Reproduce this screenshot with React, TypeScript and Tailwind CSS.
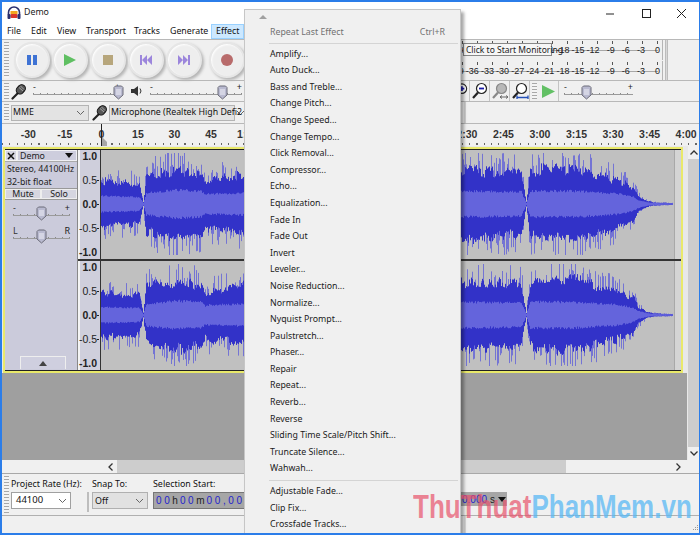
import React, { useMemo } from "react";

const ui = "font-['Noto_Sans',sans-serif]";
const effects = ["Amplify...","Auto Duck...","Bass and Treble...","Change Pitch...","Change Speed...","Change Tempo...","Click Removal...","Compressor...","Echo...","Equalization...","Fade In","Fade Out","Invert","Leveler...","Noise Reduction...","Normalize...","Nyquist Prompt...","Paulstretch...","Phaser...","Repair","Repeat...","Reverb...","Reverse","Sliding Time Scale/Pitch Shift...","Truncate Silence...","Wahwah..."];
const rulerLabels = ["-30","-15","0","15","30","45","1:00","1:15","1:30","1:45","2:00","2:15","2:30","2:45","3:00","3:15","3:30","3:45","4:00"];
const dbLabels = ["-39","-36","-33","-30","-27","-24","-21","-18","-15","-12","-9","-6","-3","0"];

function interp(t: number[][], x: number, i: number) {
  for (let k = 1; k < t.length; k++) {
    if (x <= t[k][0]) {
      const a = t[k - 1], b = t[k];
      return a[i] + (b[i] - a[i]) * ((x - a[0]) / (b[0] - a[0] || 1));
    }
  }
  return t[t.length - 1][i];
}
const env = [[0,22,8],[38,20,7],[42,2,1],[45,28,11],[75,33,14],[100,30,13],[104,22,9],[107,24,10],[143,28,11],[200,32,13],[300,33,13],[360,33,13],[420,30,12],[425,2,1],[429,32,13],[470,35,13],[490,30,12],[519,23,10],[532,17,7],[537,8,4],[545,3,2],[552,1.5,1],[572,0.8,0.8]];

function Wave({ seed }: { seed: number }) {
  const d = useMemo(() => {
    let s = seed;
    const r = () => { s = (s * 16807) % 2147483647; return s / 2147483647; };
    let light = "", dark = "", rms = "";
    let wobT = 1, wobB = 1;
    for (let x = 0; x < 572; x++) {
      if (x % 4 === 0) { wobT = 0.88 + r() * 0.26; wobB = 0.88 + r() * 0.26; }
      const p = interp(env, x, 1), m = interp(env, x, 2);
      const c = 54, X = x + 0.5;
      const jt = p * wobT * (0.9 + r() * 0.2), jb = p * wobB * (0.9 + r() * 0.2);
      const spT = r() < 0.42 ? p * (1.05 + r() * 0.6) : jt;
      const spB = r() < 0.42 ? p * (1.05 + r() * 0.6) : jb;
      light += `M${X} ${Math.max(3, c - spT).toFixed(1)}V${Math.min(105, c + spB).toFixed(1)}`;
      dark += `M${X} ${(c - jt).toFixed(1)}V${(c + jb).toFixed(1)}`;
      const mt = m * (0.9 + r() * 0.2), mb = m * (0.9 + r() * 0.2);
      rms += `M${X} ${(c - mt).toFixed(1)}V${(c + mb).toFixed(1)}`;
    }
    return { light, dark, rms };
  }, [seed]);
  return (
    <svg width="573" height="109" viewBox="0 0 573 109" className="block">
      <path d={d.light} stroke="#7474d4" strokeWidth="1" fill="none" />
      <path d={d.dark} stroke="#3232c8" strokeWidth="1" fill="none" />
      <path d={d.rms} stroke="#6464dc" strokeWidth="1" fill="none" />
    </svg>
  );
}

function Grip({ h }: { h: string }) {
  return <div className={`w-[5px] ml-[2px] mr-[2px] shrink-0 bg-[repeating-linear-gradient(180deg,#a8a8a8_0_1px,#f4f4f4_1px_3px)] ${h}`} />;
}

function Thumb() {
  return (
    <svg width="11" height="15" viewBox="0 0 11 15" className="block">
      <path d="M1 2.5 L2.5 1 H8.5 L10 2.5 V10 L5.5 14 L1 10 Z" fill="#b9bad0" stroke="#6b6b78" />
      <path d="M3 5H8M3 7H8M3 9H8" stroke="#f0f0f8" />
    </svg>
  );
}

function Slider({ w, at, l = "-", r = "+" }: { w: number; at: number; l?: string; r?: string }) {
  return (
    <div className="relative h-[18px]" style={{ width: w }}>
      <span className="absolute left-0 top-0 text-[9px] leading-[10px] text-[#333]">{l}</span>
      <span className="absolute right-0 top-0 text-[9px] leading-[10px] text-[#222]">{r}</span>
      <div className="absolute left-0 right-0 top-[11px] h-[2px] border-b border-[#9a9a9a] bg-[repeating-linear-gradient(90deg,#8a8a8a_0_1px,transparent_1px_7px)]" />
      <div className="absolute top-[3px]" style={{ left: at - 5 }}><Thumb /></div>
    </div>
  );
}

function Mic() {
  return (
    <svg width="16" height="17" viewBox="0 0 16 17" className="block shrink-0">
      <path d="M7 10 L1.5 15.5" stroke="#222" strokeWidth="2.2" strokeLinecap="round" />
      <rect x="6" y="1.5" width="7.5" height="10" rx="3.7" transform="rotate(42 10 6.5)" fill="#555" stroke="#111" />
      <path d="M8 4.5 L12 8 M9.5 3 L13 6.5" stroke="#bbb" strokeWidth="0.8" />
    </svg>
  );
}

function Transport({ children, extra = "" }: { children: React.ReactNode; extra?: string }) {
  return (
    <div className={`w-[36px] h-[36px] rounded-full flex items-center justify-center shrink-0 bg-[#eeeeee] border-2 border-[#e6e6e6] shadow-[2px_2px_3px_#b4b4b4,inset_1px_1px_2px_#ffffff] ${extra}`}>
      {children}
    </div>
  );
}

function Magnifier({ kind }: { kind: string }) {
  const gray = kind === "fit";
  return (
    <svg width="18" height="18" viewBox="0 0 18 18">
      <path d="M7 10.5 L2 16" stroke={gray ? "#888" : "#222"} strokeWidth="2.2" />
      <circle cx="10.5" cy="6.5" r="5" fill={gray ? "#b8b8b8" : "#fff"} stroke={gray ? "#888" : "#222"} strokeWidth="1.2" />
      {kind === "out" && <path d="M8 6.5H13" stroke="#1a1aa8" strokeWidth="1.8" />}
      {kind === "in" && <path d="M8 6.5H13M10.5 4V9" stroke="#1a1aa8" strokeWidth="1.8" />}
      {kind === "fit" && <path d="M9 15H17M11 13.5L9 15L11 16.5M15 13.5L17 15L15 16.5" stroke="#666" fill="none" />}
      {kind === "width" && <path d="M6 15.5H17M6 13.5V17M17 13.5V17" stroke="#2450b8" strokeWidth="1.3" fill="none" />}
    </svg>
  );
}

function Chevron() {
  return <svg width="7" height="4" viewBox="0 0 7 4" className="shrink-0"><path d="M0 0L3.5 3.5L7 0" stroke="#666" fill="none" /></svg>;
}

function Meter({ tip }: { tip?: boolean }) {
  return (
    <div className="relative w-[201px] h-[20px] border-r border-[#b5b5b5] overflow-hidden bg-[#f0f0f0]">
      <div className="absolute left-0 right-[4px] top-[1px] h-[3px] bg-[repeating-linear-gradient(90deg,#555_0_1px,transparent_1px_15px)]" />
      <div className="absolute left-0 right-[4px] top-[10px] h-px bg-[#a8a8a8]" />
      <div className="absolute right-[2px] top-[3px] w-[212px] flex flex-row-reverse text-[9px] leading-[14px] text-[#222] font-['Liberation_Sans',sans-serif]">
        {[...dbLabels].reverse().map((d) => (
          <span key={d} className="w-[15.1px] shrink-0 text-right">{d}</span>
        ))}
      </div>
      {tip && (
        <div className="absolute left-[1px] top-[3px] h-[13px] w-[89px] border border-[#888] bg-[#f6f6f6] text-[8.5px] leading-[12px] text-[#222] pl-[2px] whitespace-nowrap">
          Click to Start Monitoring
        </div>
      )}
    </div>
  );
}

function Channel({ seed }: { seed: number }) {
  return (
    <div className="flex h-[109px]">
      <div className="w-[23px] border-l-2 border-r border-l-[#f4f4f4] border-r-[#333] bg-[#cfcfdc] h-[109px] flex flex-col justify-between pb-[1px] pr-px items-end font-['Liberation_Sans',sans-serif] text-[10.5px] leading-[12px] text-[#222]">
        <span className="font-bold pr-[2px]">1.0</span>
        <span className="flex items-center">0.5<i className="block w-[2px] h-px bg-[#222]" /></span>
        <span className="font-bold flex items-center">0.0<i className="block w-[2px] h-px bg-[#222]" /></span>
        <span className="flex items-center">-0.5<i className="block w-[2px] h-px bg-[#222]" /></span>
        <span className="font-bold pr-[2px]">-1.0</span>
      </div>
      <div className="w-[573px] h-[109px] bg-[#c0c0c0]"><Wave seed={seed} /></div>
      <div className="w-[7px] bg-[#d4d4d4] border-l border-[#a8a8a8]" />
    </div>
  );
}

export default function App() {
  return (
    <div className={`relative w-[700px] h-[535px] overflow-hidden box-border border-t-2 border-b-2 border-l-2 border-r border-[#2b7de9] bg-[#f0f0f0] text-[#111] flex flex-col ${ui}`}>
      {/* Title bar */}
      <div className="h-[22px] bg-white flex items-center shrink-0">
        <svg width="14" height="14" viewBox="0 0 14 14" className="ml-[5px]">
          <path d="M1.5 9 V6.5 A5.5 5.5 0 0 1 12.5 6.5 V9" stroke="#2a2f6e" strokeWidth="1.6" fill="none" />
          <rect x="3.5" y="5" width="7" height="3" fill="#f2a51f" />
          <rect x="3.5" y="8" width="7" height="4" rx="1" fill="#d9352a" />
          <rect x="0.5" y="8" width="3" height="5" rx="1" fill="#2a2f6e" />
          <rect x="10.5" y="8" width="3" height="5" rx="1" fill="#2a2f6e" />
        </svg>
        <span className="ml-[3px] text-[8.8px] text-[#222]">Demo</span>
        <div className="ml-auto flex items-center">
          <svg width="11" height="11" viewBox="0 0 11 11" className="mr-[24px]"><path d="M0 6H8" stroke="#222" /></svg>
          <svg width="11" height="11" viewBox="0 0 11 11" className="mr-[24px]"><rect x="1.5" y="1.5" width="8" height="8" stroke="#222" fill="none" /></svg>
          <svg width="11" height="11" viewBox="0 0 11 11" className="mr-[12px]"><path d="M1 1L10 10M10 1L1 10" stroke="#222" /></svg>
        </div>
      </div>
      {/* Menu bar */}
      <div className="h-[16px] bg-white border-b border-[#b8b8b8] flex items-center text-[8.8px] leading-[15px] text-[#111] shrink-0">
        <span className="ml-[5px] w-[24px]">File</span>
        <span className="w-[26px]">Edit</span>
        <span className="w-[29px]">View</span>
        <span className="w-[48px]">Transport</span>
        <span className="w-[36px]">Tracks</span>
        <span className="w-[41px]">Generate</span>
        <span className="h-[15px] w-[33px] bg-[#cce8ff] border border-[#99d1ff] pl-[4px] leading-[13px]">Effect</span>
      </div>
      {/* Transport + meters */}
      <div className="h-[41px] flex items-center justify-between border-b border-[#b8b8b8] shrink-0">
        <div className="flex items-center">
          <Grip h="h-[36px]" />
          <div className="flex gap-[2px] ml-[3px]">
            <Transport><div className="flex gap-[2px]"><div className="w-[4px] h-[10px] bg-[#3f73d4]" /><div className="w-[4px] h-[10px] bg-[#3f73d4]" /></div></Transport>
            <Transport><svg width="12" height="12" viewBox="0 0 12 12"><path d="M0 0L12 6L0 12Z" fill="#5fbf62" /></svg></Transport>
            <Transport><div className="w-[10px] h-[10px] bg-[#b7a67c]" /></Transport>
            <Transport><svg width="12" height="10" viewBox="0 0 12 10"><path d="M0 0H2V10H0ZM2 5L7 0V10ZM7 5L12 0V10Z" fill="#9c86dc" /></svg></Transport>
            <Transport><svg width="12" height="10" viewBox="0 0 12 10"><path d="M10 0H12V10H10ZM10 5L5 0V10ZM5 5L0 0V10Z" fill="#9c86dc" /></svg></Transport>
            <Transport extra="ml-[5px]"><div className="w-[12px] h-[12px] rounded-full bg-[#b86b6b]" /></Transport>
          </div>
        </div>
        <div className="flex items-stretch h-full">
          <div className="flex flex-col gap-px">
            <Meter tip />
            <Meter />
          </div>
          <div className="w-[3px] ml-[2px] bg-[#d8d8d8] border-x border-[#bcbcbc]" />
          <div className="w-[31px]" />
        </div>
      </div>
      {/* Mixer + zoom */}
      <div className="h-[21px] flex items-center border-b border-[#b8b8b8] shrink-0">
        <Grip h="h-[16px]" />
        <Mic />
        <div className="ml-[6px]"><Slider w={87} at={85} /></div>
        <svg width="12" height="12" viewBox="0 0 12 12" className="ml-[11px]"><path d="M0 4H3L7 1V11L3 8H0Z" fill="#333" /><path d="M9 3.5Q11 6 9 8.5" stroke="#333" fill="none" /></svg>
        <div className="ml-[7px]"><Slider w={92} at={72} /></div>
        <div className="ml-auto flex items-center h-full">
          <div className="w-[18px] h-full flex items-center justify-center border-r border-[#c4c4c4]"><Magnifier kind="in" /></div>
          <div className="w-[20px] h-full flex items-center justify-center border-r border-[#c4c4c4]"><Magnifier kind="out" /></div>
          <div className="w-[20px] h-full flex items-center justify-center border-r border-[#c4c4c4]"><Magnifier kind="fit" /></div>
          <div className="w-[20px] h-full flex items-center justify-center border-r border-[#c4c4c4]"><Magnifier kind="width" /></div>
          <Grip h="h-[16px]" />
          <div className="w-[20px] h-full flex items-center justify-center border-r border-[#c4c4c4]"><svg width="13" height="13" viewBox="0 0 13 13"><path d="M0 0L13 6.5L0 13Z" fill="#62c065" /></svg></div>
          <div className="ml-[5px] mr-[66px]"><Slider w={69} at={22} /></div>
        </div>
      </div>
      {/* Device */}
      <div className="h-[22px] flex items-center border-b border-[#b8b8b8] shrink-0">
        <Grip h="h-[17px]" />
        <div className="w-[78px] h-[16px] bg-[#e3e3e3] border border-[#b4b4b4] flex items-center pl-[1px] text-[8.8px] justify-between pr-[4px]">
          MME
          <Chevron />
        </div>
        <div className="ml-[3px]"><Mic /></div>
        <div className="ml-[1px] w-[126px] h-[16px] bg-[#e3e3e3] border border-[#b4b4b4] flex items-center pl-[1px] pr-[4px] justify-between whitespace-nowrap text-[8.8px]">
          <span>Microphone (Realtek High Defi</span>
          <Chevron />
        </div>
        <div className="ml-[2px] flex-1 text-[8.8px]">2</div>
        <div className="w-[235px] h-full relative">
          <div className="absolute left-0 top-0 bottom-0 w-[2px] bg-[#d0d0d0]" />
        </div>
      </div>
      {/* Ruler */}
      <div className="relative h-[22px] bg-[#f0f0f0] shrink-0 flex pl-[8px] font-['Liberation_Sans',sans-serif] font-bold text-[10.5px] leading-[14px] text-[#333] pt-[3px] overflow-hidden">
        {rulerLabels.map((r) => (
          <span key={r} className="w-[36.55px] shrink-0 text-center">{r}</span>
        ))}
        <div className="absolute left-0 right-0 bottom-[1px] h-[2px] bg-[repeating-linear-gradient(90deg,#666_0_1px,transparent_1px_7.3px)]" />
        <div className="absolute left-[99px] top-0 bottom-0 w-px bg-[#222]" />
        <svg width="6" height="9" viewBox="0 0 6 9" className="absolute left-[100px] bottom-0"><path d="M0 0L5 5V9H0Z" fill="#a6a6a6" /></svg>
      </div>
      {/* Tracks */}
      <div className="h-[314px] flex shrink-0">
        <div className="flex-1 bg-[#9f9f9f] min-w-0">
          <div className="bg-[#e8e8e8] pl-px h-[227px] pt-px pr-[3px]">
            <div className="w-[680px] h-[226px] border-2 border-[#e9e96a] bg-[#222] box-border">
              <div className="flex h-[222px] border-y border-[#222]">
                <div className="w-[73px] shrink-0 bg-[#cbcbdb] border-r border-[#888] flex flex-col text-[8.8px] leading-[12px] text-[#222]">
                  <div className="flex h-[12px] border-b border-[#aaa] bg-[#cdcddd]">
                    <div className="w-[12px] h-[11px] flex items-center justify-center border border-[#f4f4f4] bg-[#d4d4e0]">
                      <svg width="8" height="8" viewBox="0 0 8 8"><path d="M1 1L7 7M7 1L1 7" stroke="#111" strokeWidth="1.5" /></svg>
                    </div>
                    <div className="flex-1 flex justify-between items-center pl-[2px] pr-[3px] border border-[#f0f0f4]">
                      Demo
                      <svg width="8" height="5" viewBox="0 0 8 5"><path d="M0 0H8L4 5Z" fill="#111" /></svg>
                    </div>
                  </div>
                  <div className="pl-[2px] mt-[1px] leading-[12px] whitespace-nowrap">Stereo, 44100Hz</div>
                  <div className="pl-[2px] leading-[12px] mt-px">32-bit float</div>
                  <div className="flex h-[12px] border-y border-[#999]">
                    <div className="w-[36px] text-center border border-[#eee] leading-[9px] bg-[#d6d6e0]">Mute</div>
                    <div className="flex-1 text-center border border-[#eee] leading-[9px] bg-[#d6d6e0]">Solo</div>
                  </div>
                  <div className="ml-[8px] mt-[3px]"><Slider w={57} at={28} /></div>
                  <div className="ml-[8px] mt-[5px]"><Slider w={57} at={28} l="L" r="R" /></div>
                  <div className="mt-auto mb-[1px] w-[46px] h-[13px] border-x border-t border-[#eee] bg-[#cfcfdf] flex items-center justify-center ml-[15px]">
                    <svg width="8" height="5" viewBox="0 0 8 5"><path d="M0 5L4 0L8 5Z" fill="#444" /></svg>
                  </div>
                </div>
                <div className="flex flex-col flex-1">
                  <Channel seed={12345} />
                  <div className="h-[4px] bg-[#5a5a5a] border-y border-[#333]" />
                  <Channel seed={98765} />
                </div>
              </div>
            </div>
          </div>
        </div>
        <div className="w-[12px] bg-[#f0f0f0] flex flex-col items-center border-l border-[#e8e8e8]">
          <div className="h-[13px] flex items-center"><svg width="8" height="5" viewBox="0 0 8 5"><path d="M0.5 4.5L4 1L7.5 4.5" stroke="#333" strokeWidth="1.3" fill="none" /></svg></div>
          <div className="flex-1 w-full bg-[#cdcdcd]" />
          <div className="h-[13px] flex items-center"><svg width="8" height="5" viewBox="0 0 8 5"><path d="M0.5 0.5L4 4L7.5 0.5" stroke="#333" strokeWidth="1.3" fill="none" /></svg></div>
        </div>
      </div>
      {/* H scroll */}
      <div className="h-[14px] shrink-0 flex items-center border-b border-[#a8a8a8]">
        <div className="w-[102px]" />
        <div className="w-[13px] flex justify-center"><svg width="5" height="8" viewBox="0 0 5 8"><path d="M4.5 0.5L1 4L4.5 7.5" stroke="#333" strokeWidth="1.3" fill="none" /></svg></div>
        <div className="w-[449px] h-full bg-[#cdcdcd]" />
        <div className="flex-1" />
        <div className="w-[13px] mr-[14px] flex justify-center"><svg width="5" height="8" viewBox="0 0 5 8"><path d="M0.5 0.5L4 4L0.5 7.5" stroke="#333" strokeWidth="1.3" fill="none" /></svg></div>
      </div>
      {/* Selection */}
      <div className="h-[42px] shrink-0 flex border-b border-[#b0b0b0] text-[8.9px]">
        <div className="self-center"><Grip h="h-[37px]" /></div>
        <div className="flex flex-col pt-[3px] w-[72px]">
          <span className="leading-[14px] whitespace-nowrap">Project Rate (Hz):</span>
          <div className="mt-[1px] w-[60px] h-[17px] bg-white border border-[#a0a0a0] flex items-center justify-between pl-[4px] pr-[4px] text-[9.5px]">44100<Chevron /></div>
        </div>
        <div className="ml-[4px] w-[2px] h-[20px] mt-[18px] bg-[#bdbdbd]" />
        <div className="ml-[3px] flex flex-col pt-[3px]">
          <span className="leading-[14px]">Snap To:</span>
          <div className="mt-[1px] w-[56px] h-[17px] bg-[#e1e1e1] border border-[#b0b0b0] flex items-center justify-between pl-[2px] pr-[4px]">Off<Chevron /></div>
        </div>
        <div className="ml-[5px] flex flex-col pt-[3px]">
          <span className="leading-[14px] whitespace-nowrap">Selection Start:</span>
          <div className="mt-[1px] w-[92px] h-[17px] bg-[#a6a6a6] border border-[#777] flex items-center pl-[2px] text-[10px] tracking-[2.6px] whitespace-nowrap overflow-hidden font-['Liberation_Sans',sans-serif] text-[#2424cc]">00<span className="text-[#222] tracking-normal mr-[2px]">h</span>00<span className="text-[#222] tracking-normal mr-[2px]">m</span>00,00</div>
        </div>
        <div className="ml-[216px] mt-[18px] w-[46px] h-[14px] bg-[#a6a6a6] flex items-center text-[10px] font-['Liberation_Sans',sans-serif] whitespace-nowrap text-[#2424cc] overflow-hidden">
          <span className="ml-px">0.000</span><span className="text-[#222] ml-[3px]">s</span>
          <svg width="8" height="5" viewBox="0 0 8 5" className="ml-auto mr-[1px]"><path d="M0 0H8L4 5Z" fill="#111" /></svg>
        </div>
      </div>
      {/* Status */}
      <div className="h-[17px] shrink-0 flex justify-end">
        <div className="w-[2px] bg-[#d8d8d8] mr-[224px]" />
        <svg width="9" height="9" viewBox="0 0 9 9" className="self-end"><path d="M7 1h1v1H7zM5 3h1v1H5zM7 3h1v1H7zM3 5h1v1H3zM5 5h1v1H5zM7 5h1v1H7z" fill="#999" /></svg>
      </div>

      {/* Effect menu */}
      <div className="absolute left-[242px] top-[7px] w-[217px] h-[530px] bg-[#f0f0f0] border border-[#c6c6c6] shadow-[3px_3px_3px_rgba(0,0,0,0.35)] text-[8.8px] text-[#1a1a1a] flex flex-col">
        <div className="pl-[14px] h-[13px] pt-[5px] flex"><svg width="8" height="4" viewBox="0 0 8 4"><path d="M0 4L4 0L8 4Z" fill="#a0a0a0" /></svg></div>
        <div className="flex justify-between pl-[25px] pr-[15px] h-[16.6px] mt-[1px] leading-[16.6px] text-[#707070]"><span>Repeat Last Effect</span><span>Ctrl+R</span></div>
        <div className="ml-[24px] mr-[2px] h-px bg-[#d4d4d4] mt-[2px] mb-[2px] shrink-0" />
        <div>
          {effects.map((e) => (
            <div key={e} className="pl-[25px] h-[16.6px] leading-[16.6px] whitespace-nowrap">{e}</div>
          ))}
        </div>
        <div className="ml-[24px] mr-[2px] h-px bg-[#d4d4d4] mt-[3px] mb-[2px] shrink-0" />
        {["Adjustable Fade...", "Clip Fix...", "Crossfade Tracks..."].map((e) => (
          <div key={e} className="pl-[25px] h-[16.6px] leading-[16.6px] whitespace-nowrap">{e}</div>
        ))}
      </div>
      {/* Watermark */}
      <div className="absolute left-[411px] top-[488px] text-[26px] leading-[34px] font-bold whitespace-nowrap font-['Liberation_Sans',sans-serif] scale-y-125">
        <span className="text-[#e8506a]/70">ThuThuat</span><span className="text-[#5ab8f5]/75">PhanMem.vn</span>
      </div>
    </div>
  );
}
